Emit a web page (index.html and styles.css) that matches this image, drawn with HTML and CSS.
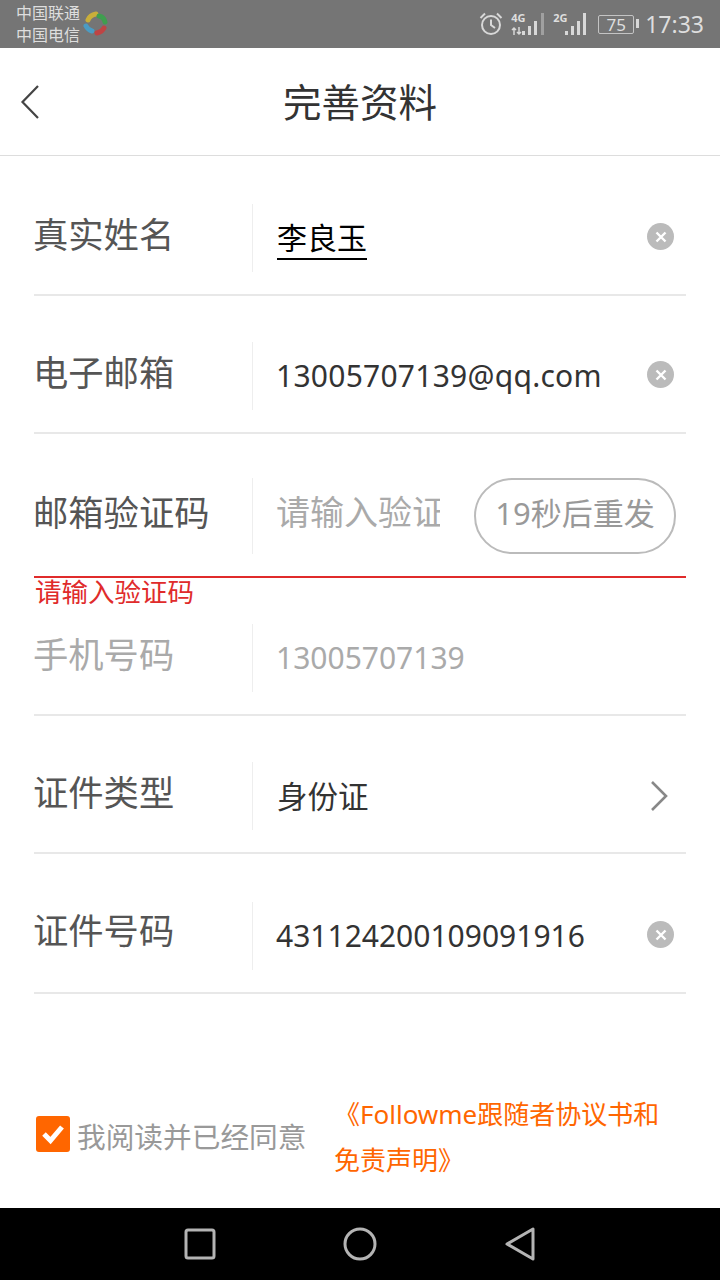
FILE: index.html
```html
<!DOCTYPE html>
<html lang="zh-CN">
<head>
	<meta charset="UTF-8">
	<title>完善资料</title>
	<link rel="stylesheet" href="styles.css">
</head>
<body>
	<div class="status">
		<div class="carrier">
			<span>中国联通</span>
			<span>中国电信</span>
		</div>
		<svg class="logo" width="26" height="26" viewBox="0 0 26 26" fill="none" stroke-width="5" stroke-linecap="round">
			<path d="M5 9 Q7 4 13 3" stroke="#c9ae3a"/>
			<path d="M16 5 Q21 6 22 11" stroke="#3f9e4f"/>
			<path d="M3 15 Q5 19 9 20" stroke="#4b9cc4"/>
			<path d="M14 22 Q19 21 21 17" stroke="#bf4444"/>
		</svg>
		<div class="status-right">
			<svg class="alarm" width="24" height="24" viewBox="0 0 24 24" fill="none" stroke="#d8d8d8" stroke-width="2">
				<circle cx="12" cy="13" r="9"/>
				<path d="M12 7.5 V13 L16 16"/>
				<path d="M1.5 6 L6 1.5 M22.5 6 L18 1.5"/>
			</svg>
			<div class="net">
				<span class="net-label">4G</span>
				<svg width="36" height="24" viewBox="0 0 36 24" fill="#d8d8d8">
					<path d="M3 23 V16 M1 18 L3 16 L5 18 M8 15 V22 M6 20 L8 22 L10 20" fill="none" stroke="#d8d8d8" stroke-width="1.5"/>
					<rect x="11" y="19" width="3" height="4"/>
					<rect x="17" y="14" width="3" height="9"/>
					<rect x="23" y="9" width="3" height="14"/>
					<rect x="30" y="1" width="3" height="22" fill="#a0a0a0"/>
				</svg>
			</div>
			<div class="net">
				<span class="net-label">2G</span>
				<svg width="36" height="24" viewBox="0 0 36 24" fill="#d8d8d8">
					<rect x="12" y="19" width="3" height="4"/>
					<rect x="18" y="14" width="3" height="9"/>
					<rect x="24" y="9" width="3" height="14"/>
					<rect x="30" y="1" width="3" height="22"/>
				</svg>
			</div>
			<div class="battery"><span class="battery-num">75</span></div>
			<span class="clock">17:33</span>
		</div>
	</div>

	<header class="title-bar">
		<svg class="back" width="22" height="38" viewBox="0 0 22 38" fill="none" stroke="#444" stroke-width="2.2">
			<path d="M19 3 L3.5 19 L19 35"/>
		</svg>
		<h1>完善资料</h1>
	</header>

	<main class="form">
		<div class="row row-name">
			<label>真实姓名</label>
			<div class="field">
				<span class="value value-cn underlined">李良玉</span>
				<span class="clear"><svg width="12" height="12" viewBox="0 0 12 12" stroke="#fff" stroke-width="2.4"><path d="M1.5 1.5 L10.5 10.5 M10.5 1.5 L1.5 10.5"/></svg></span>
			</div>
		</div>
		<div class="row">
			<label>电子邮箱</label>
			<div class="field">
				<span class="value email">13005707139@qq.com</span>
				<span class="clear"><svg width="12" height="12" viewBox="0 0 12 12" stroke="#fff" stroke-width="2.4"><path d="M1.5 1.5 L10.5 10.5 M10.5 1.5 L1.5 10.5"/></svg></span>
			</div>
		</div>
		<div class="row row-code">
			<label>邮箱验证码</label>
			<div class="field">
				<span class="placeholder">请输入验证码</span>
				<span class="resend">19秒后重发</span>
			</div>
		</div>
		<p class="error">请输入验证码</p>
		<div class="row row-phone">
			<label class="muted">手机号码</label>
			<div class="field">
				<span class="value muted">13005707139</span>
			</div>
		</div>
		<div class="row">
			<label>证件类型</label>
			<div class="field">
				<span class="value value-cn">身份证</span>
				<svg class="chevron" width="20" height="32" viewBox="0 0 20 32" fill="none" stroke="#888" stroke-width="2.6"><path d="M3 2 L17 16 L3 30"/></svg>
			</div>
		</div>
		<div class="row row-last">
			<label>证件号码</label>
			<div class="field">
				<span class="value">431124200109091916</span>
				<span class="clear"><svg width="12" height="12" viewBox="0 0 12 12" stroke="#fff" stroke-width="2.4"><path d="M1.5 1.5 L10.5 10.5 M10.5 1.5 L1.5 10.5"/></svg></span>
			</div>
		</div>
	</main>

	<div class="agree">
		<span class="check"><svg width="24" height="22" viewBox="0 0 24 22" fill="none" stroke="#fff" stroke-width="5"><path d="M3 11 L9.5 17.5 L21 4"/></svg></span>
		<span class="agree-text">我阅读并已经同意</span>
		<a class="agree-link">《Followme跟随者协议书和免责声明》</a>
	</div>

	<nav class="navbar">
		<svg width="32" height="32" viewBox="0 0 32 32" fill="none" stroke="#b4b4b4" stroke-width="3"><rect x="2" y="2" width="28" height="28" rx="2"/></svg>
		<svg width="34" height="34" viewBox="0 0 34 34" fill="none" stroke="#b4b4b4" stroke-width="3"><circle cx="17" cy="17" r="15"/></svg>
		<svg width="32" height="34" viewBox="0 0 32 34" fill="none" stroke="#b4b4b4" stroke-width="3" stroke-linejoin="round"><path d="M29 2 V32 L3 17 Z"/></svg>
	</nav>
</body>
</html>
```

FILE: styles.css
```css
* {
	box-sizing: border-box;
}
body {
	margin: 0;
	width: 720px;
	height: 1280px;
	display: flex;
	flex-direction: column;
	overflow: hidden;
	background-color: white;
	color: #333;
	font-family: "Noto Sans", "Noto Sans CJK SC", sans-serif;
}

/* status bar */
.status {
	height: 48px;
	flex: none;
	display: flex;
	align-items: center;
	padding: 0 16px;
	background-color: #757575;
	color: #dedede;
}
.carrier {
	display: flex;
	flex-direction: column;
	font-size: 16px;
	line-height: 22px;
}
.logo {
	margin-left: 3px;
}
.status-right {
	margin-left: auto;
	display: flex;
	align-items: center;
}
.alarm {
	margin-right: 2px;
}
.net {
	position: relative;
	margin-left: 6px;
	height: 24px;
}
.net-label {
	position: absolute;
	left: 0;
	top: -1px;
	font-size: 11px;
	font-weight: 700;
	line-height: 14px;
}
.battery {
	width: 36px;
	height: 19px;
	margin-left: 9px;
	border: 1.5px solid #c4c4c4;
	border-radius: 2px;
	display: flex;
	align-items: center;
	justify-content: center;
	position: relative;
}
.battery::after {
	content: "";
	position: absolute;
	right: -5.5px;
	top: 3.5px;
	width: 2.5px;
	height: 9px;
	background-color: #d8d8d8;
}
.battery-num {
	font-size: 17px;
	line-height: 17px;
}
.clock {
	margin-left: 11px;
	font-size: 23px;
}

/* title */
.title-bar {
	height: 108px;
	flex: none;
	position: relative;
	display: flex;
	align-items: center;
	justify-content: center;
	padding-bottom: 4px;
	border-bottom: 1px solid #ddd;
}
.title-bar h1 {
	margin: 0;
	font-size: 38.5px;
	font-weight: 400;
	color: #333;
}
.back {
	position: absolute;
	left: 19px;
	top: 35px;
}

/* form rows */
.form {
	flex: none;
	padding: 0 34px;
}
.row {
	display: flex;
	align-items: center;
	height: 138px;
	padding-top: 23px;
	border-bottom: 2px solid #e8e8e8;
}
.row-name {
	height: 140px;
	padding-top: 25px;
}
.row-code {
	height: 144px;
	padding-top: 22px;
	border-bottom-color: #e02b2b;
}
.row-code .field {
	height: 76px;
}
.row-phone {
	height: 110px;
	padding-top: 0;
	padding-bottom: 5px;
}
.row-last {
	height: 140px;
	padding-top: 25px;
}
.row label {
	width: 218px;
	flex: none;
	font-size: 35.3px;
	line-height: 68px;
	color: #555;
	margin-top: -8px;
	margin-left: -1px;
	margin-right: 1px;
}
.row label.muted {
	color: #aaa;
}
.row-last label {
	margin-top: -12px;
}
.field {
	flex: 1;
	min-width: 0;
	height: 68px;
	padding-left: 23px;
	display: flex;
	align-items: center;
	border-left: 1px solid #eee;
}
.value {
	font-size: 30px;
	line-height: 40px;
	color: #333;
}
.value.muted {
	color: #aaa;
}
.value-cn {
	font-size: 30.5px;
	margin-left: 1px;
}
.email {
	letter-spacing: 0.25px;
}
.underlined {
	margin-top: 2px;
	font-size: 30px;
	color: #000;
	border-bottom: 2px solid #000;
}
.clear {
	width: 27px;
	height: 27px;
	margin-left: auto;
	margin-right: 12px;
	margin-bottom: 2px;
	border-radius: 50%;
	background-color: #bbb;
	display: flex;
	align-items: center;
	justify-content: center;
}
.placeholder {
	width: 164px;
	flex: none;
	margin-bottom: 12px;
	overflow: hidden;
	white-space: nowrap;
	font-size: 34px;
	color: #aaa;
}
.resend {
	width: 202px;
	height: 76px;
	margin-left: auto;
	margin-right: 10px;
	padding-bottom: 9px;
	flex: none;
	border: 2px solid #bbb;
	border-radius: 38px;
	display: flex;
	align-items: center;
	justify-content: center;
	font-size: 31px;
	color: #999;
}
.chevron {
	margin-left: auto;
	margin-right: 17px;
}
.error {
	margin: 0;
	padding-left: 1px;
	font-size: 26.5px;
	line-height: 28px;
	color: #e02b2b;
}

/* agreement */
.agree {
	flex: 1;
	padding: 98px 34px 0 36px;
	display: flex;
	align-items: flex-start;
}
.check {
	width: 34px;
	height: 36px;
	flex: none;
	margin-top: 24px;
	border-radius: 3px;
	background-color: #ff6600;
	display: flex;
	align-items: center;
	justify-content: center;
}
.agree-text {
	margin-left: 7px;
	margin-top: 22px;
	width: 230px;
	flex: none;
	font-size: 28.7px;
	line-height: 46px;
	white-space: nowrap;
	color: #999;
}
.agree-link {
	margin-left: 27px;
	margin-top: -1px;
	width: 340px;
	flex: none;
	font-size: 26px;
	line-height: 46px;
	color: #ff6600;
}

/* android nav */
.navbar {
	height: 72px;
	flex: none;
	display: flex;
	align-items: center;
	justify-content: center;
	gap: 127px;
	background-color: black;
}
```
